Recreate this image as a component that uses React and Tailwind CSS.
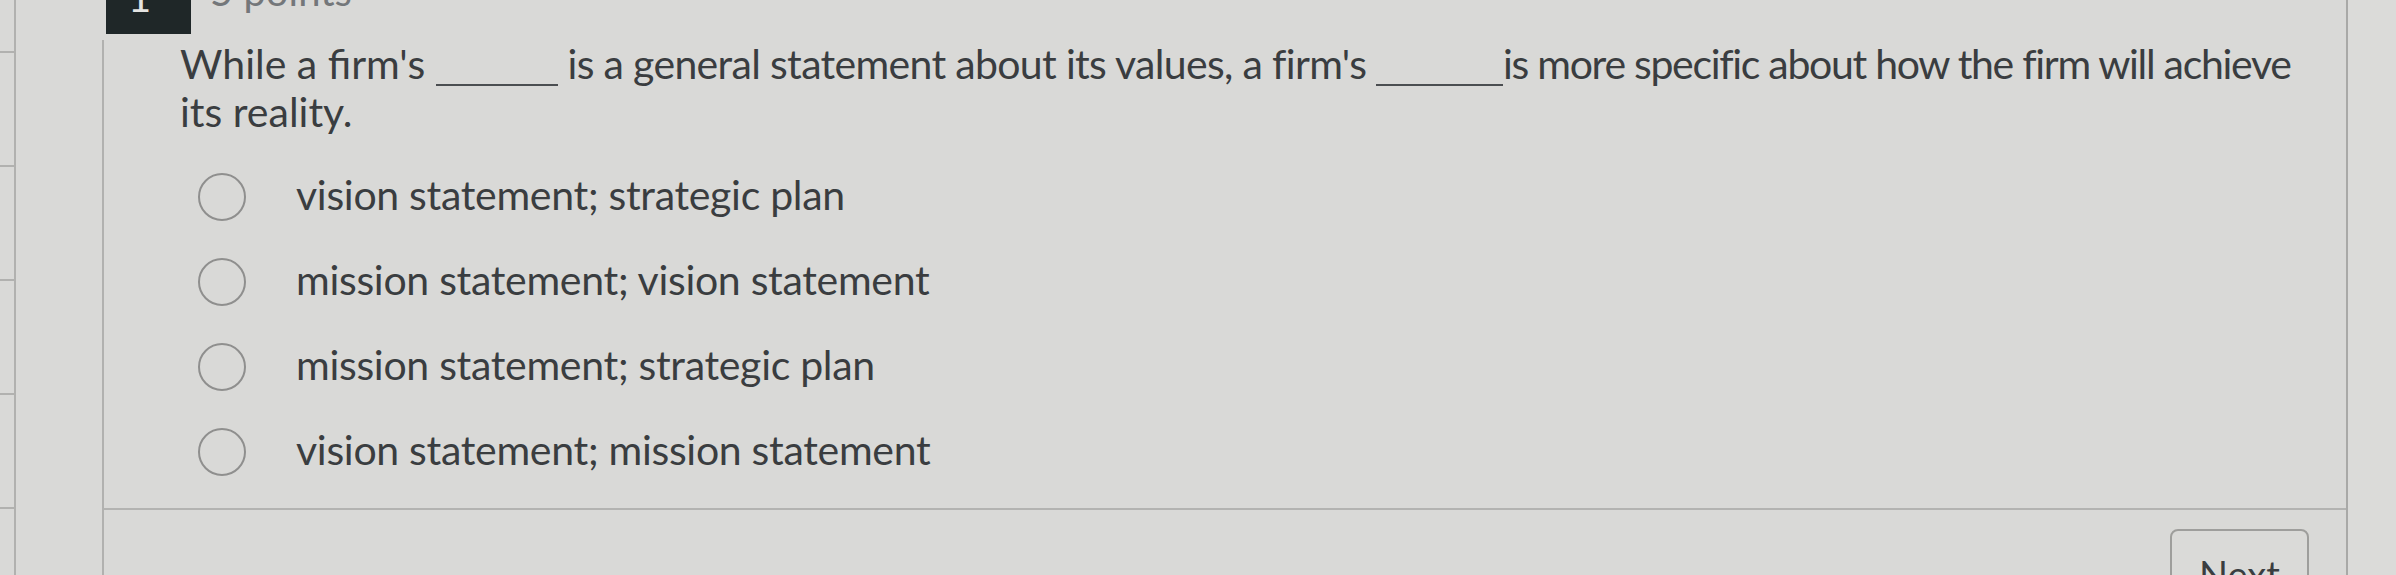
const options = [
  "vision statement; strategic plan",
  "mission statement; vision statement",
  "mission statement; strategic plan",
  "vision statement; mission statement",
];

function Blank({ width }) {
  return (
    <span
      className="inline-block h-[2px] bg-[#4b4e51] align-[-7px]"
      style={{ width }}
    />
  );
}

export default function App() {
  return (
    <div className="flex h-[575px] w-[2396px] overflow-hidden bg-[#d9d9d7] font-['Lato',sans-serif] text-[#3a3d40]">
      {/* left nav strip */}
      <div className="flex w-[16px] shrink-0 flex-col border-r-2 border-[#b1b1af]">
        <div className="h-[51px] shrink-0" />
        {[0, 1, 2, 3, 4].map((i) => (
          <div key={i} className="h-[114px] shrink-0 border-t-2 border-[#b1b1af]" />
        ))}
      </div>
      <div className="w-[86px] shrink-0" />

      {/* question card */}
      <div className="flex w-[2246px] shrink-0 flex-col border-r-2 border-[#a9a9a7]">
        <div className="flex h-[34px] shrink-0 items-start">
          <div className="ml-[4px] h-[34px] w-[85px] overflow-hidden bg-[#1f2728] pl-[22px]">
            <div className="mt-[-23px] text-[40px] leading-[40px] text-[#e4e4e2]">1</div>
          </div>
          <div className="ml-[19px] mt-[-29px] text-[40px] leading-[40px] text-[#74777a]">5 points</div>
        </div>

        <div className="mt-[6px] flex flex-1 flex-col border-l-2 border-[#b1b1af]">
          <p className="whitespace-nowrap pl-[76px] text-[41px] leading-[48px]">
            While a firm's <Blank width={122} />
            <span className="tracking-[-0.67px]"> is a general statement about its values, a firm's </span>
            <Blank width={127} />
            <span className="tracking-[-1.3px]">is more specific about how the firm will achieve</span>
            <br />
            its reality.
          </p>

          <div className="mt-[18px] flex flex-col">
            {options.map((o) => (
              <div key={o} className="flex h-[85px] items-center pl-[94px]">
                <div className="h-[48px] w-[48px] shrink-0 rounded-full border-2 border-[#8f8f8e]" />
                <span className="ml-[50px] mt-[-4px] text-[41px] leading-[48px] tracking-[-0.3px]">{o}</span>
              </div>
            ))}
          </div>

          <div className="mt-[14px] border-t-2 border-[#b3b3b1]" />

          <div className="flex justify-end pr-[37px] pt-[19px]">
            <button className="flex h-[60px] w-[139px] justify-center rounded-[8px] border-2 border-[#9e9e9c] bg-[#dadad8] pt-[24px] text-[38px] leading-[38px] text-[#3a3d40]">
              Next
            </button>
          </div>
        </div>
      </div>

      <div className="flex-1 bg-[#dbdbd9]" />
    </div>
  );
}
